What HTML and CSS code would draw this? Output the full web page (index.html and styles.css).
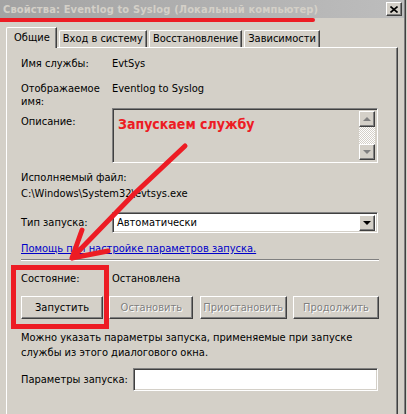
FILE: index.html
```html
<!DOCTYPE html>
<html lang="ru">
<head>
  <meta charset="UTF-8" />
  <title>Свойства: Eventlog to Syslog</title>
  <link rel="stylesheet" href="styles.css">
</head>
<body>
  <div class="window">
    <div class="titlebar">
      <span class="title">Свойства: Eventlog to Syslog (Локальный компьютер)</span>
      <span class="close-btn">
        <svg width="8" height="7" viewBox="0 0 8 7"><path d="M0.5 0.5 L7.5 6.5 M7.5 0.5 L0.5 6.5" stroke="#000" stroke-width="1.6"/></svg>
      </span>
    </div>
    <div class="title-mark"></div>

    <div class="tabs">
      <div class="tab active">Общие</div>
      <div class="tab">Вход в систему</div>
      <div class="tab">Восстановление</div>
      <div class="tab">Зависимости</div>
    </div>

    <div class="panel">
      <div class="field row-name">
        <div class="field-label">Имя службы:</div>
        <div>EvtSys</div>
      </div>

      <div class="field row-display">
        <div class="field-label">Отображаемое имя:</div>
        <div>Eventlog to Syslog</div>
      </div>

      <div class="field row-desc">
        <div class="field-label desc-label">Описание:</div>
        <div class="desc-box">
          <div class="desc-text">Запускаем службу</div>
          <div class="scrollbar">
            <div class="scroll-btn"><span class="tri-up"></span></div>
            <div class="scroll-track"></div>
            <div class="scroll-btn"><span class="tri-down"></span></div>
          </div>
        </div>
      </div>

      <div class="exe-label">Исполняемый файл:</div>
      <div class="exe-path">C:\Windows\System32\evtsys.exe</div>

      <div class="field row-start">
        <div class="field-label">Тип запуска:</div>
        <div class="combo">
          <span class="combo-value">Автоматически</span>
          <span class="combo-btn"><span class="tri-down black"></span></span>
        </div>
      </div>

      <a class="help-link" href="#">Помощь при настройке параметров запуска.</a>

      <div class="separator"></div>

      <div class="field row-state">
        <div class="field-label">Состояние:</div>
        <div>Остановлена</div>
      </div>

      <div class="buttons">
        <button class="btn btn-start">Запустить</button>
        <button class="btn btn-stop" disabled>Остановить</button>
        <button class="btn btn-pause" disabled>Приостановить</button>
        <button class="btn btn-resume" disabled>Продолжить</button>
      </div>

      <p class="note">Можно указать параметры запуска, применяемые при запуске службы из этого диалогового окна.</p>

      <div class="field row-params">
        <div class="params-label">Параметры запуска:</div>
        <div class="text-input"></div>
      </div>
    </div>

    <div class="mark-box"></div>
    <svg class="mark-arrow" width="407" height="414" viewBox="0 0 407 414">
      <path d="M185 146 L134 194 L72 258 M82 230 L72 258 L108 251" fill="none" stroke="#ed1c24" stroke-width="5" stroke-linecap="round" stroke-linejoin="round"/>
    </svg>
  </div>
</body>
</html>
```

FILE: styles.css
```css
:root {
  --face: #d4d0c8;
  --shadow: #808080;
  --dark: #404040;
  --mark: #ed1c24;
}

* {
  box-sizing: border-box;
}

body {
  margin: 0;
  background: var(--face);
  color: #000;
  font-family: "DejaVu Sans Condensed", "DejaVu Sans", sans-serif;
  font-size: 11px;
  line-height: 13px;
}

.window {
  position: relative;
  width: 406px;
  height: 414px;
  overflow: hidden;
  border-right: 1px solid var(--dark);
  box-shadow: inset -1px 0 var(--shadow);
}

.titlebar {
  display: flex;
  justify-content: space-between;
  align-items: center;
  width: 404px;
  height: 18px;
  padding: 0 2px 0 3px;
  background: linear-gradient(to right, #a3a3a3, #bdbdbd);
}

.title {
  color: var(--face);
  font-weight: bold;
  white-space: nowrap;
  letter-spacing: 0.15px;
}

.close-btn {
  display: flex;
  align-items: center;
  justify-content: center;
  width: 16px;
  height: 14px;
  background: var(--face);
  border: 1px solid;
  border-color: #fff var(--dark) var(--dark) #fff;
  box-shadow: inset -1px -1px var(--shadow);
}

.title-mark {
  position: absolute;
  left: 0;
  top: 18px;
  width: 315px;
  height: 4px;
  background: var(--mark);
  border-radius: 0 2px 2px 0;
}

.tabs {
  display: flex;
  align-items: flex-end;
  gap: 2px;
  margin-top: 9px;
  padding-left: 6px;
  height: 20px;
}

.tab {
  position: relative;
  height: 17px;
  padding: 1px 3px 0;
  border-top: 1px solid #fff;
  border-left: 1px solid #fff;
  border-right: 1px solid var(--dark);
  border-top-left-radius: 2px;
  box-shadow: inset -1px 0 var(--shadow);
  white-space: nowrap;
}

.tab.active {
  height: 21px;
  margin-bottom: -1px;
  padding: 3px 6px 0 7px;
  background: var(--face);
  z-index: 1;
}

.panel {
  width: 392px;
  height: 370px;
  margin-left: 6px;
  padding: 9px 18px 0 14px;
  border-top: 1px solid #fff;
  border-left: 1px solid #fff;
  border-right: 1px solid var(--dark);
  box-shadow: inset -1px 0 var(--shadow);
}

.field {
  display: flex;
  align-items: center;
}

.field-label {
  width: 91px;
  flex: none;
}

.row-display {
  margin-top: 12px;
  align-items: flex-start;
}

.row-display .field-label {
  width: 80px;
  margin-right: 11px;
}

.row-desc {
  align-items: flex-start;
}

.desc-label {
  padding-top: 7px;
}

.desc-box {
  display: flex;
  justify-content: space-between;
  width: 266px;
  height: 55px;
  border: 1px solid;
  border-color: var(--shadow) #fff #fff var(--shadow);
  box-shadow: inset 1px 1px var(--dark), inset -1px -1px var(--face);
  padding: 2px;
}

.desc-text {
  padding: 4px 0 0 3px;
  color: var(--mark);
  font-weight: bold;
  font-size: 14px;
  line-height: 18px;
}

.scrollbar {
  display: flex;
  flex-direction: column;
  width: 16px;
}

.scroll-btn {
  display: flex;
  align-items: center;
  justify-content: center;
  height: 16px;
  background: var(--face);
  border: 1px solid;
  border-color: #fff var(--dark) var(--dark) #fff;
  box-shadow: inset -1px -1px var(--shadow);
}

.scroll-track {
  flex: 1;
  background: repeating-conic-gradient(#fff 0 25%, var(--face) 0 50%) 0 0 / 2px 2px;
}

.tri-up,
.tri-down {
  width: 0;
  height: 0;
  border-left: 4px solid transparent;
  border-right: 4px solid transparent;
}

.tri-up {
  border-bottom: 4px solid var(--shadow);
}

.tri-down {
  border-top: 4px solid var(--shadow);
}

.tri-down.black {
  border-top-color: #000;
}

.exe-label {
  margin-top: 8px;
}

.exe-path {
  margin-top: 3px;
}

.row-start {
  margin-top: 12px;
}

.combo {
  display: flex;
  align-items: center;
  justify-content: space-between;
  width: 266px;
  height: 21px;
  background: #fff;
  border: 1px solid;
  border-color: var(--shadow) #fff #fff var(--shadow);
  box-shadow: inset 1px 1px var(--dark), inset -1px -1px var(--face);
  padding: 2px;
}

.combo-value {
  padding-left: 2px;
}

.combo-btn {
  display: flex;
  align-items: center;
  justify-content: center;
  width: 16px;
  height: 16px;
  background: var(--face);
  border: 1px solid;
  border-color: #fff var(--dark) var(--dark) #fff;
  box-shadow: inset -1px -1px var(--shadow);
}

.help-link {
  display: block;
  width: max-content;
  margin-top: 9px;
  color: #0000c8;
  text-decoration: underline;
}

.separator {
  margin-top: 4px;
  height: 2px;
  border-top: 1px solid var(--shadow);
  border-bottom: 1px solid #fff;
}

.row-state {
  margin-top: 11px;
}

.buttons {
  display: flex;
  justify-content: space-between;
  margin-top: 11px;
}

.btn {
  height: 23px;
  padding: 0;
  background: var(--face);
  border: 1px solid;
  border-color: #fff var(--dark) var(--dark) #fff;
  box-shadow: inset -1px -1px var(--shadow);
  font: inherit;
  color: #000;
}

.btn:disabled {
  color: var(--shadow);
  text-shadow: 1px 1px #fff;
}

.btn-start { width: 82px; }
.btn-stop { width: 84px; }
.btn-pause { width: 87px; }
.btn-resume { width: 86px; }

.note {
  margin: 11px 0 0;
  line-height: 15px;
}

.row-params {
  margin-top: 8px;
}

.params-label {
  width: 112px;
  flex: none;
}

.text-input {
  width: 245px;
  height: 23px;
  background: #fff;
  border: 1px solid;
  border-color: var(--shadow) #fff #fff var(--shadow);
  box-shadow: inset 1px 1px var(--dark), inset -1px -1px var(--face);
}

.mark-box {
  position: absolute;
  left: 11px;
  top: 265px;
  width: 98px;
  height: 64px;
  border: 5px solid var(--mark);
}

.mark-arrow {
  position: absolute;
  left: 0;
  top: 0;
  pointer-events: none;
}
```
